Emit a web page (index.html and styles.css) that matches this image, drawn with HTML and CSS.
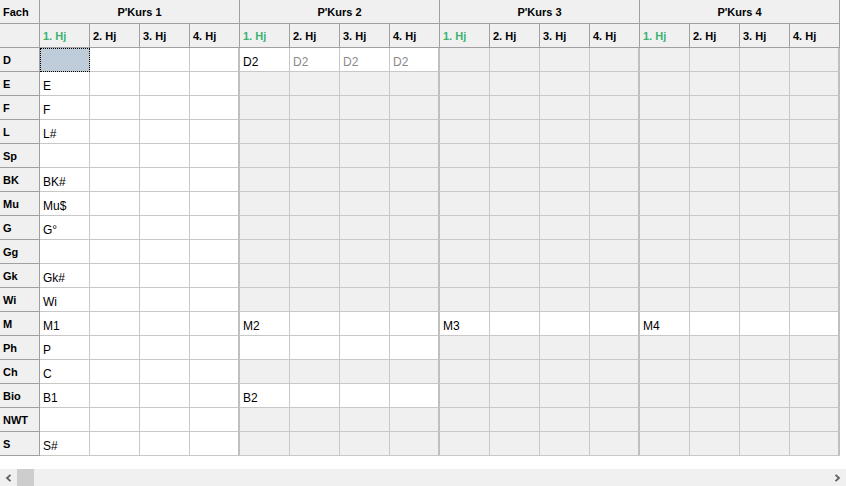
FILE: index.html
```html
<!DOCTYPE html>
<html lang="de">
<head>
    <meta charset="UTF-8">
    <title>Kursbelegung</title>
    <link rel="stylesheet" href="styles.css">
</head>
<body>
    <div class="grid">
        <!-- Kopfzeilen -->
        <div class="row head">
            <div class="h corner">Fach</div>
            <div class="h kurs">P'Kurs 1</div>
            <div class="h kurs">P'Kurs 2</div>
            <div class="h kurs">P'Kurs 3</div>
            <div class="h kurs">P'Kurs 4</div>
        </div>
        <div class="row head">
            <div class="h corner"></div>
            <div class="h hj now">1. Hj</div><div class="h hj">2. Hj</div><div class="h hj">3. Hj</div><div class="h hj">4. Hj</div>
            <div class="h hj now">1. Hj</div><div class="h hj">2. Hj</div><div class="h hj">3. Hj</div><div class="h hj">4. Hj</div>
            <div class="h hj now">1. Hj</div><div class="h hj">2. Hj</div><div class="h hj">3. Hj</div><div class="h hj">4. Hj</div>
            <div class="h hj now">1. Hj</div><div class="h hj">2. Hj</div><div class="h hj">3. Hj</div><div class="h hj">4. Hj</div>
        </div>

        <!-- Fächer -->
        <div class="row">
            <div class="rh">D</div>
            <div class="c sel"></div><div class="c"></div><div class="c"></div><div class="c"></div>
            <div class="c on">D2</div><div class="c on dim">D2</div><div class="c on dim">D2</div><div class="c on dim">D2</div>
            <div class="c"></div><div class="c"></div><div class="c"></div><div class="c"></div>
            <div class="c"></div><div class="c"></div><div class="c"></div><div class="c"></div>
        </div>
        <div class="row">
            <div class="rh">E</div>
            <div class="c">E</div><div class="c"></div><div class="c"></div><div class="c"></div>
            <div class="c"></div><div class="c"></div><div class="c"></div><div class="c"></div>
            <div class="c"></div><div class="c"></div><div class="c"></div><div class="c"></div>
            <div class="c"></div><div class="c"></div><div class="c"></div><div class="c"></div>
        </div>
        <div class="row">
            <div class="rh">F</div>
            <div class="c">F</div><div class="c"></div><div class="c"></div><div class="c"></div>
            <div class="c"></div><div class="c"></div><div class="c"></div><div class="c"></div>
            <div class="c"></div><div class="c"></div><div class="c"></div><div class="c"></div>
            <div class="c"></div><div class="c"></div><div class="c"></div><div class="c"></div>
        </div>
        <div class="row">
            <div class="rh">L</div>
            <div class="c">L#</div><div class="c"></div><div class="c"></div><div class="c"></div>
            <div class="c"></div><div class="c"></div><div class="c"></div><div class="c"></div>
            <div class="c"></div><div class="c"></div><div class="c"></div><div class="c"></div>
            <div class="c"></div><div class="c"></div><div class="c"></div><div class="c"></div>
        </div>
        <div class="row">
            <div class="rh">Sp</div>
            <div class="c"></div><div class="c"></div><div class="c"></div><div class="c"></div>
            <div class="c"></div><div class="c"></div><div class="c"></div><div class="c"></div>
            <div class="c"></div><div class="c"></div><div class="c"></div><div class="c"></div>
            <div class="c"></div><div class="c"></div><div class="c"></div><div class="c"></div>
        </div>
        <div class="row">
            <div class="rh">BK</div>
            <div class="c">BK#</div><div class="c"></div><div class="c"></div><div class="c"></div>
            <div class="c"></div><div class="c"></div><div class="c"></div><div class="c"></div>
            <div class="c"></div><div class="c"></div><div class="c"></div><div class="c"></div>
            <div class="c"></div><div class="c"></div><div class="c"></div><div class="c"></div>
        </div>
        <div class="row">
            <div class="rh">Mu</div>
            <div class="c">Mu$</div><div class="c"></div><div class="c"></div><div class="c"></div>
            <div class="c"></div><div class="c"></div><div class="c"></div><div class="c"></div>
            <div class="c"></div><div class="c"></div><div class="c"></div><div class="c"></div>
            <div class="c"></div><div class="c"></div><div class="c"></div><div class="c"></div>
        </div>
        <div class="row">
            <div class="rh">G</div>
            <div class="c">G°</div><div class="c"></div><div class="c"></div><div class="c"></div>
            <div class="c"></div><div class="c"></div><div class="c"></div><div class="c"></div>
            <div class="c"></div><div class="c"></div><div class="c"></div><div class="c"></div>
            <div class="c"></div><div class="c"></div><div class="c"></div><div class="c"></div>
        </div>
        <div class="row">
            <div class="rh">Gg</div>
            <div class="c"></div><div class="c"></div><div class="c"></div><div class="c"></div>
            <div class="c"></div><div class="c"></div><div class="c"></div><div class="c"></div>
            <div class="c"></div><div class="c"></div><div class="c"></div><div class="c"></div>
            <div class="c"></div><div class="c"></div><div class="c"></div><div class="c"></div>
        </div>
        <div class="row">
            <div class="rh">Gk</div>
            <div class="c">Gk#</div><div class="c"></div><div class="c"></div><div class="c"></div>
            <div class="c"></div><div class="c"></div><div class="c"></div><div class="c"></div>
            <div class="c"></div><div class="c"></div><div class="c"></div><div class="c"></div>
            <div class="c"></div><div class="c"></div><div class="c"></div><div class="c"></div>
        </div>
        <div class="row">
            <div class="rh">Wi</div>
            <div class="c">Wi</div><div class="c"></div><div class="c"></div><div class="c"></div>
            <div class="c"></div><div class="c"></div><div class="c"></div><div class="c"></div>
            <div class="c"></div><div class="c"></div><div class="c"></div><div class="c"></div>
            <div class="c"></div><div class="c"></div><div class="c"></div><div class="c"></div>
        </div>
        <div class="row">
            <div class="rh">M</div>
            <div class="c">M1</div><div class="c"></div><div class="c"></div><div class="c"></div>
            <div class="c on">M2</div><div class="c on"></div><div class="c on"></div><div class="c on"></div>
            <div class="c on">M3</div><div class="c on"></div><div class="c on"></div><div class="c on"></div>
            <div class="c on">M4</div><div class="c on"></div><div class="c on"></div><div class="c on"></div>
        </div>
        <div class="row">
            <div class="rh">Ph</div>
            <div class="c">P</div><div class="c"></div><div class="c"></div><div class="c"></div>
            <div class="c on"></div><div class="c on"></div><div class="c on"></div><div class="c on"></div>
            <div class="c"></div><div class="c"></div><div class="c"></div><div class="c"></div>
            <div class="c"></div><div class="c"></div><div class="c"></div><div class="c"></div>
        </div>
        <div class="row">
            <div class="rh">Ch</div>
            <div class="c">C</div><div class="c"></div><div class="c"></div><div class="c"></div>
            <div class="c"></div><div class="c"></div><div class="c"></div><div class="c"></div>
            <div class="c"></div><div class="c"></div><div class="c"></div><div class="c"></div>
            <div class="c"></div><div class="c"></div><div class="c"></div><div class="c"></div>
        </div>
        <div class="row">
            <div class="rh">Bio</div>
            <div class="c">B1</div><div class="c"></div><div class="c"></div><div class="c"></div>
            <div class="c on">B2</div><div class="c on"></div><div class="c on"></div><div class="c on"></div>
            <div class="c"></div><div class="c"></div><div class="c"></div><div class="c"></div>
            <div class="c"></div><div class="c"></div><div class="c"></div><div class="c"></div>
        </div>
        <div class="row">
            <div class="rh">NWT</div>
            <div class="c"></div><div class="c"></div><div class="c"></div><div class="c"></div>
            <div class="c"></div><div class="c"></div><div class="c"></div><div class="c"></div>
            <div class="c"></div><div class="c"></div><div class="c"></div><div class="c"></div>
            <div class="c"></div><div class="c"></div><div class="c"></div><div class="c"></div>
        </div>
        <div class="row">
            <div class="rh">S</div>
            <div class="c">S#</div><div class="c"></div><div class="c"></div><div class="c"></div>
            <div class="c"></div><div class="c"></div><div class="c"></div><div class="c"></div>
            <div class="c"></div><div class="c"></div><div class="c"></div><div class="c"></div>
            <div class="c"></div><div class="c"></div><div class="c"></div><div class="c"></div>
        </div>
    </div>

    <div class="hscroll">
        <div class="arrow">
            <svg width="7" height="8" viewBox="0 0 7 8"><path d="M5.5 0.8 L2 4 L5.5 7.2" fill="none" stroke="#606060" stroke-width="1.8"/></svg>
        </div>
        <div class="thumb"></div>
        <div class="track"></div>
        <div class="arrow">
            <svg width="7" height="8" viewBox="0 0 7 8"><path d="M1.5 0.8 L5 4 L1.5 7.2" fill="none" stroke="#606060" stroke-width="1.8"/></svg>
        </div>
    </div>
</body>
</html>
```

FILE: styles.css
```css
:root {
    --face: #f0f0f0;
    --line-dark: #a0a0a0;
    --line-light: #c8c8c8;
    --green: #3cb371;
    --selected: #bfcddb;
}

body {
    margin: 0;
    background: #ffffff;
    font-family: 'Liberation Sans', Arial, sans-serif;
    color: #000;
}

.grid {
    width: 840px;
}

.row {
    display: flex;
    height: 24px;
}

.row > div {
    flex: none;
    box-sizing: border-box;
    white-space: nowrap;
    overflow: hidden;
}

/* header cells */
.h {
    width: 50px;
    background: var(--face);
    border-right: 1px solid var(--line-dark);
    border-bottom: 1px solid var(--line-dark);
    font-size: 11px;
    font-weight: bold;
    line-height: 13px;
    padding: 6px 0 0 3px;
}

.h.corner {
    width: 40px;
}

.h.kurs {
    width: 200px;
    text-align: center;
    padding-left: 0;
}

.h.now {
    color: var(--green);
}

/* row headers */
.rh {
    width: 40px;
    background: var(--face);
    border-right: 1px solid var(--line-dark);
    border-bottom: 1px solid var(--line-dark);
    font-size: 11px;
    font-weight: bold;
    line-height: 13px;
    padding: 6px 0 0 3px;
}

/* data cells */
.c {
    width: 50px;
    background: var(--face);
    border-right: 1px solid var(--line-light);
    border-bottom: 1px solid var(--line-light);
    font-size: 12px;
    line-height: 14px;
    padding: 7px 0 0 3px;
}

.row > .c:nth-child(-n+5),
.c.on {
    background: #fff;
}

.row > .c:nth-child(4n+5) {
    border-right: 2px solid #c0c0c0;
}

.c.dim {
    color: #8a8a8a;
}

.c.sel {
    background: var(--selected) !important;
    outline: 1px dotted #000;
    outline-offset: -1px;
}

/* horizontal scrollbar */
.hscroll {
    display: flex;
    height: 17px;
    margin-top: 13px;
    background: var(--face);
}

.arrow {
    width: 17px;
    display: flex;
    align-items: center;
    justify-content: center;
}

.thumb {
    width: 17px;
    background: #cdcdcd;
}

.track {
    flex: 1;
}
```
